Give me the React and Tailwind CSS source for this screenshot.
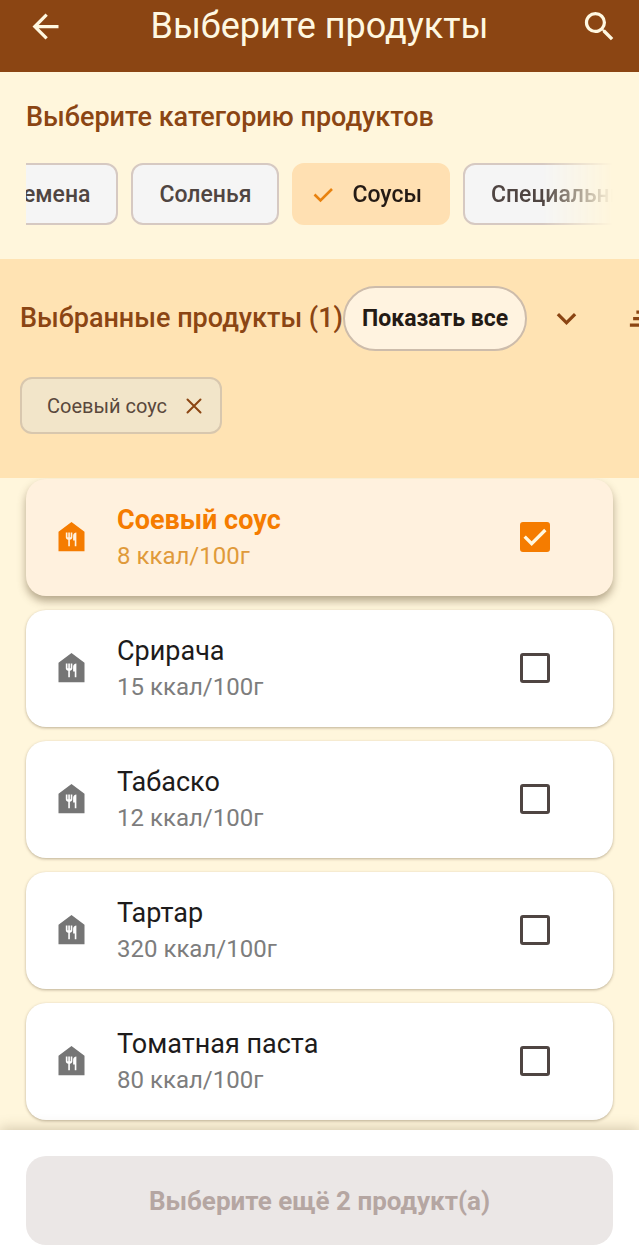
import { useLayoutEffect, useRef, useState } from "react";
import { MdArrowBack, MdClearAll, MdExpandMore, MdFoodBank, MdSearch } from "react-icons/md";

const categories = ["Семена", "Соленья", "Соусы", "Специальные"];

const products = [
  { id: "soy", name: "Соевый соус", kcal: 8 },
  { id: "sriracha", name: "Срирача", kcal: 15 },
  { id: "tabasco", name: "Табаско", kcal: 12 },
  { id: "tartar", name: "Тартар", kcal: 320 },
  { id: "tomato", name: "Томатная паста", kcal: 80 },
];

const REQUIRED = 3;

function CategoryChip({ label, active, onClick }) {
  return (
    <button
      type="button"
      aria-pressed={active}
      onClick={onClick}
      className={`flex h-[62px] shrink-0 items-center rounded-xl border-2 pt-0.5 text-[23px] font-medium ${
        active
          ? "border-[#ffe0b2] bg-[#ffe0b2] pr-[26px] pl-4 text-[#241a14]"
          : "border-[#d6c9c2] bg-[#f5f5f5] px-[26px] text-[#4f4542]"
      }`}
    >
      {active && (
        <svg viewBox="0 0 26 26" className="mr-4 size-[26px] text-[#e8820f]" fill="none">
          <path d="M4.5 12.5 L10.5 18.5 L22 7" stroke="currentColor" strokeWidth="2.6" />
        </svg>
      )}
      {label}
    </button>
  );
}

function ProductCard({ product, checked, onToggle }) {
  return (
    <label
      className={`flex h-[117px] items-center rounded-[20px] pr-[63px] pb-0.5 pl-[26px] ${
        checked
          ? "bg-[#fff1de] shadow-[0_5px_8px_rgba(90,70,40,0.45)]"
          : "bg-white shadow-[0_1px_3px_rgba(90,70,40,0.4)]"
      }`}
    >
      <MdFoodBank className={`size-[39px] shrink-0 ${checked ? "text-[#f57c00]" : "text-[#757575]"}`} />
      <span className="ml-[26px] flex-1 pt-1">
        <span
          className={`block text-[27px] leading-9 ${
            checked ? "font-bold text-[#f57c00]" : "text-[#1d1b1b]"
          }`}
        >
          {product.name}
        </span>
        <span className={`block text-2xl leading-[37px] ${checked ? "text-[#e09a3a]" : "text-[#7d7d7d]"}`}>
          {product.kcal} ккал/100г
        </span>
      </span>
      <span className="grid size-[30px] shrink-0">
        <input
          type="checkbox"
          checked={checked}
          onChange={onToggle}
          className="col-start-1 row-start-1 size-[30px] appearance-none rounded-[3px] border-3 border-[#4f4542] checked:border-[#f57c00] checked:bg-[#f57c00]"
        />
        {checked && (
          <svg viewBox="0 0 18 18" className="pointer-events-none col-start-1 row-start-1 size-[30px]" fill="none">
            <path d="M2.8 8.8 L7 13 L15.2 4.8" stroke="#fff8e1" strokeWidth="2" />
          </svg>
        )}
      </span>
    </label>
  );
}

export default function App() {
  const [category, setCategory] = useState("Соусы");
  const [selected, setSelected] = useState(["soy"]);
  const scroller = useRef(null);

  useLayoutEffect(() => {
    scroller.current.scrollLeft = 46;
  }, []);

  const toggle = (id) =>
    setSelected((prev) => (prev.includes(id) ? prev.filter((x) => x !== id) : [...prev, id]));

  const left = REQUIRED - selected.length;

  return (
    <div className="flex min-h-screen flex-col bg-[#fff6dc] font-[Roboto,sans-serif]">
      <header className="flex h-[72px] items-center bg-[#8b4513] px-[26px] pb-5 text-[#fff8e1]">
        <button type="button" aria-label="Назад">
          <MdArrowBack className="size-[39px]" />
        </button>
        <h1 className="flex-1 pr-1.5 text-center text-4xl">Выберите продукты</h1>
        <button type="button" aria-label="Поиск" className="-mr-1.5">
          <MdSearch className="size-[39px]" />
        </button>
      </header>

      <section className="h-[187px] px-[26px] pt-[27px]">
        <h2 className="text-[27px] leading-9 font-medium text-[#8b4513]">Выберите категорию продуктов</h2>
        <div
          ref={scroller}
          className="mt-7 flex gap-[13px] overflow-x-auto [mask-image:linear-gradient(to_right,black_88%,transparent)] [scrollbar-width:none]"
        >
          {categories.map((c) => (
            <CategoryChip key={c} label={c} active={c === category} onClick={() => setCategory(c)} />
          ))}
        </div>
      </section>

      <section className="h-[219px] overflow-hidden bg-[#ffe3b3] px-5 pt-[27px] text-[#8b4513]">
        <div className="flex items-center">
          <h2 className="shrink-0 text-[27px] font-medium">Выбранные продукты ({selected.length})</h2>
          <button
            type="button"
            className="h-[65px] shrink-0 rounded-full border-2 border-[#cdbcab] bg-[#fff3e0] px-[17px] pt-0.5 text-[23px] font-bold text-[#241a14]"
          >
            Показать все
          </button>
          <button type="button" aria-label="Развернуть" className="flex w-[78px] shrink-0 justify-center">
            <MdExpandMore className="size-[39px]" />
          </button>
          <button type="button" aria-label="Очистить" className="flex w-[78px] shrink-0 justify-center">
            <MdClearAll className="size-[39px]" />
          </button>
        </div>
        <div className="mt-[26px] flex gap-3">
          {products
            .filter((p) => selected.includes(p.id))
            .map((p) => (
              <div
                key={p.id}
                className="flex h-[57px] items-center gap-[18px] rounded-xl border-2 border-[#d8c7ae] bg-[#f2e5c9] pr-[17px] pl-[25px] text-xl text-[#5a483c]"
              >
                {p.name}
                <button type="button" aria-label={`Убрать ${p.name}`} onClick={() => toggle(p.id)}>
                  <svg viewBox="0 0 18 18" className="size-[18px] text-[#8b4513]" fill="none">
                    <path d="M2.5 2.5 L15.5 15.5 M15.5 2.5 L2.5 15.5" stroke="currentColor" strokeWidth="2" strokeLinecap="round" />
                  </svg>
                </button>
              </div>
            ))}
        </div>
      </section>

      <main className="flex flex-1 flex-col gap-3.5 overflow-hidden px-[26px] pt-px pb-2.5">
        {products.map((p) => (
          <ProductCard
            key={p.id}
            product={p}
            checked={selected.includes(p.id)}
            onToggle={() => toggle(p.id)}
          />
        ))}
      </main>

      <footer className="sticky bottom-0 bg-white px-[26px] pt-[26px] pb-[5px] shadow-[0_-2px_12px_rgba(90,70,40,0.25)]">
        <button
          type="button"
          disabled={left > 0}
          className="h-[89px] w-full rounded-[20px] bg-[#8b4513] pt-0.5 text-[26px] font-bold text-white disabled:bg-[#ebe7e6] disabled:text-[#b5a6a2]"
        >
          {left > 0 ? `Выберите ещё ${left} продукт(а)` : "Продолжить"}
        </button>
      </footer>
    </div>
  );
}
